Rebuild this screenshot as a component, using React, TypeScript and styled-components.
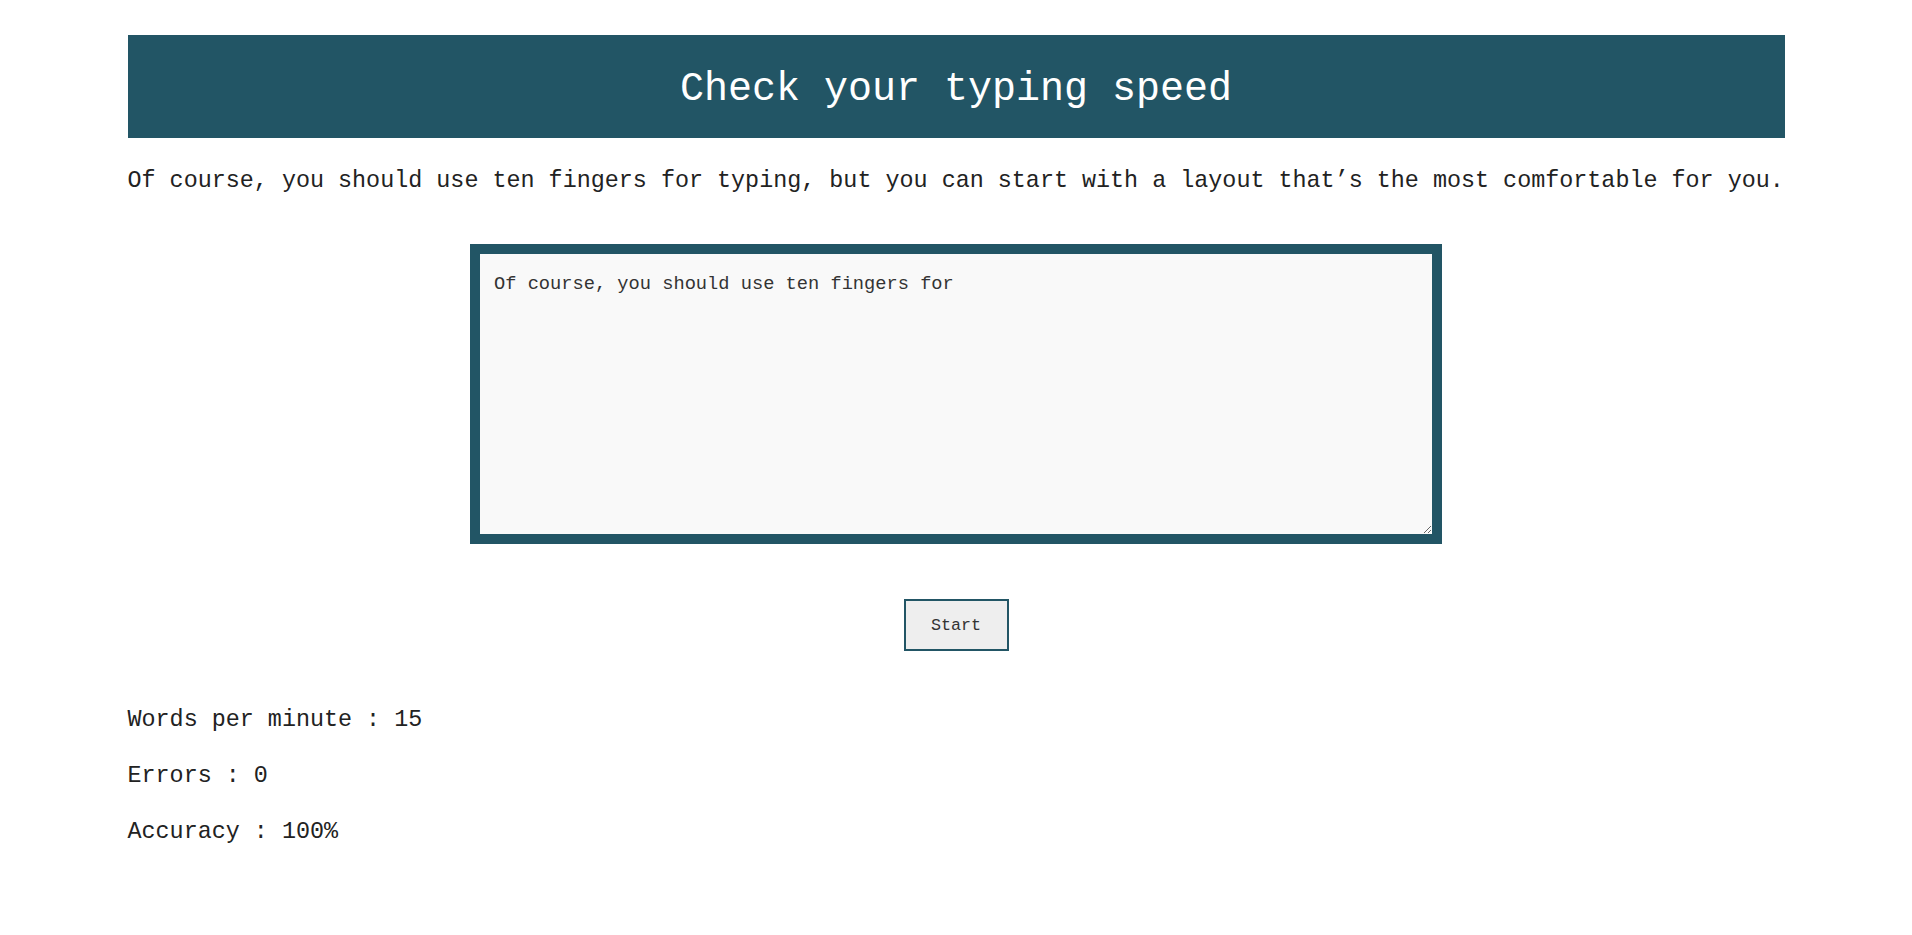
import React from "react";
import styled, { createGlobalStyle } from "styled-components";

const GlobalStyle = createGlobalStyle`
  body {
    margin: 0;
    background: #ffffff;
    font-family: "Liberation Mono", "DejaVu Sans Mono", monospace;
    color: #222;
  }
`;

const Container = styled.div`
  width: 1657px;
  margin: 35px auto 0;
  display: flex;
  flex-direction: column;
`;

const Title = styled.h1`
  box-sizing: border-box;
  margin: 0;
  height: 103px;
  padding-top: 6px;
  line-height: 97px;
  background: #225565;
  color: #ffffff;
  text-align: center;
  font-size: 40px;
  font-weight: normal;
`;

const Intro = styled.p`
  margin: 27px 0 0;
  font-size: 23.4px;
  line-height: 32px;
  white-space: nowrap;
`;

const TypingArea = styled.textarea`
  display: block;
  box-sizing: border-box;
  width: 972px;
  height: 300px;
  margin: 47px auto 0;
  padding: 18px 14px;
  border: 10px solid #225565;
  background: #f9f9f9;
  font-family: "Liberation Mono", "DejaVu Sans Mono", monospace;
  font-size: 18.7px;
  line-height: 24px;
  color: #333;
  outline: none;
`;

const ButtonRow = styled.div`
  display: flex;
  justify-content: center;
  margin-top: 55px;
`;

const StartButton = styled.button`
  box-sizing: border-box;
  width: 105px;
  height: 52px;
  border: 2px solid #225565;
  background: #eeeeee;
  font-family: "Liberation Mono", "DejaVu Sans Mono", monospace;
  font-size: 16.7px;
  color: #333;
  cursor: pointer;
`;

const Stats = styled.div`
  margin-top: 53px;
  display: flex;
  flex-direction: column;
  gap: 24px;
`;

const Stat = styled.p`
  margin: 0;
  font-size: 23.4px;
  line-height: 32px;
`;

const App: React.FC = () => {
  return (
    <Container>
      <GlobalStyle />
      <Title>Check your typing speed</Title>
      <Intro>
        Of course, you should use ten fingers for typing, but you can start with a layout that’s the most comfortable
        for you.
      </Intro>
      <TypingArea defaultValue="Of course, you should use ten fingers for" />
      <ButtonRow>
        <StartButton>Start</StartButton>
      </ButtonRow>
      <Stats>
        <Stat>Words per minute : 15</Stat>
        <Stat>Errors : 0</Stat>
        <Stat>Accuracy : 100%</Stat>
      </Stats>
    </Container>
  );
};

export default App;
